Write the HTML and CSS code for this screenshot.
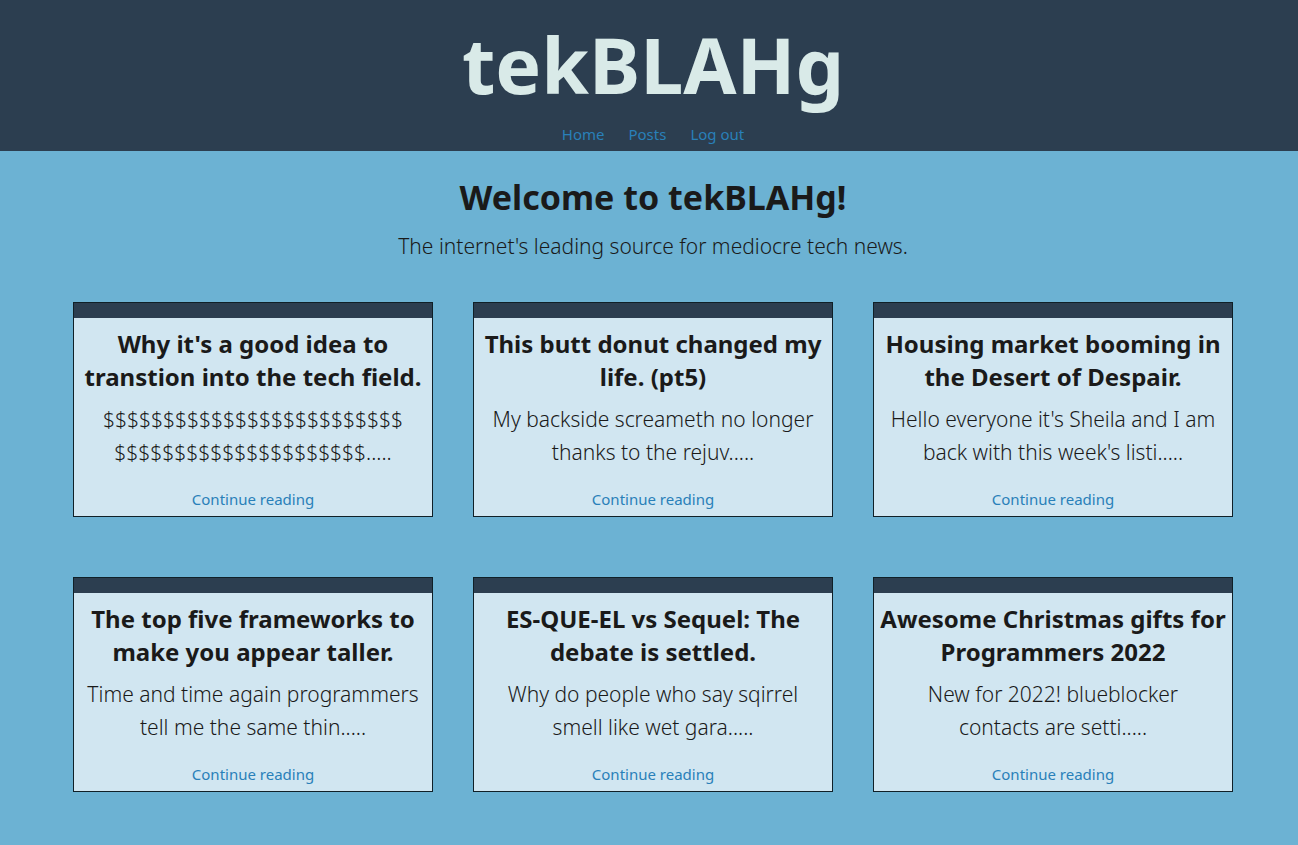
FILE: index.html
```
<!DOCTYPE html>
<html lang="en">
<head>
<meta charset="utf-8">
<title>tekBLAHg</title>
<link rel="stylesheet" href="styles.css">
</head>
<body>
<header class="site-header">
  <h1 class="logo">tekBLAHg</h1>
  <nav class="site-nav">
    <a href="#">Home</a>
    <a href="#">Posts</a>
    <a href="#">Log out</a>
  </nav>
</header>
<main class="content">
  <h2 class="welcome">Welcome to tekBLAHg!</h2>
  <p class="tagline">The internet's leading source for mediocre tech news.</p>
  <section class="posts">
    <article class="card">
      <h3 class="card-title">Why it's a good idea to<br>transtion into the tech field.</h3>
      <p class="card-text">$$$$$$$$$$$$$$$$$$$$$$$$$<br>$$$$$$$$$$$$$$$$$$$$$.....</p>
      <a class="card-link" href="#">Continue reading</a>
    </article>
    <article class="card">
      <h3 class="card-title">This butt donut changed my<br>life. (pt5)</h3>
      <p class="card-text">My backside screameth no longer<br>thanks to the rejuv.....</p>
      <a class="card-link" href="#">Continue reading</a>
    </article>
    <article class="card">
      <h3 class="card-title">Housing market booming in<br>the Desert of Despair.</h3>
      <p class="card-text">Hello everyone it's Sheila and I am<br>back with this week's listi.....</p>
      <a class="card-link" href="#">Continue reading</a>
    </article>
    <article class="card">
      <h3 class="card-title">The top five frameworks to<br>make you appear taller.</h3>
      <p class="card-text">Time and time again programmers<br>tell me the same thin.....</p>
      <a class="card-link" href="#">Continue reading</a>
    </article>
    <article class="card">
      <h3 class="card-title">ES-QUE-EL vs Sequel: The<br>debate is settled.</h3>
      <p class="card-text">Why do people who say sqirrel<br>smell like wet gara.....</p>
      <a class="card-link" href="#">Continue reading</a>
    </article>
    <article class="card">
      <h3 class="card-title">Awesome Christmas gifts for<br>Programmers 2022</h3>
      <p class="card-text">New for 2022! blueblocker<br>contacts are setti.....</p>
      <a class="card-link" href="#">Continue reading</a>
    </article>
  </section>
</main>
</body>
</html>
```
FILE: styles.css
```
* {
  box-sizing: border-box;
}

body {
  margin: 0;
  background: #6cb2d3;
  color: #1a1a1a;
  font-family: "Noto Sans", "Open Sans", sans-serif;
  font-weight: 300;
  text-align: center;
}

h1, h2, h3, p {
  margin: 0;
}

h1, h2, h3 {
  font-weight: 700;
}

a {
  color: #2980b9;
  font-size: 15px;
  font-weight: 400;
  line-height: 24px;
  text-decoration: none;
}

.site-header {
  padding: 8px 0 5px 8px;
  background: #2c3e50;
}

.logo {
  padding-bottom: 1px;
  color: #d9eae8;
  font-size: 77px;
  line-height: 113px;
}

.site-nav {
  display: flex;
  justify-content: center;
  gap: 24px;
}

.content {
  padding: 19px 45px 53px 53px;
}

.welcome {
  font-size: 34px;
  line-height: 54px;
}

.tagline {
  padding-top: 6px;
  font-size: 21px;
  line-height: 33px;
}

.posts {
  display: grid;
  grid-template-columns: repeat(3, minmax(0, 1fr));
  gap: 60px 40px;
  padding: 39px 20px 0;
}

.card {
  border: 1px solid #102028;
  background: #d1e6f1;
  overflow-wrap: anywhere;
}

.card::before {
  content: "";
  display: block;
  height: 15px;
  background: #2c3e50;
}

.card-title {
  padding-top: 9px;
  font-size: 24px;
  line-height: 33px;
}

.card-text {
  padding-top: 10px;
  font-size: 21px;
  line-height: 33px;
}

.card-link {
  display: block;
  padding: 18px 0 5px;
}
```
